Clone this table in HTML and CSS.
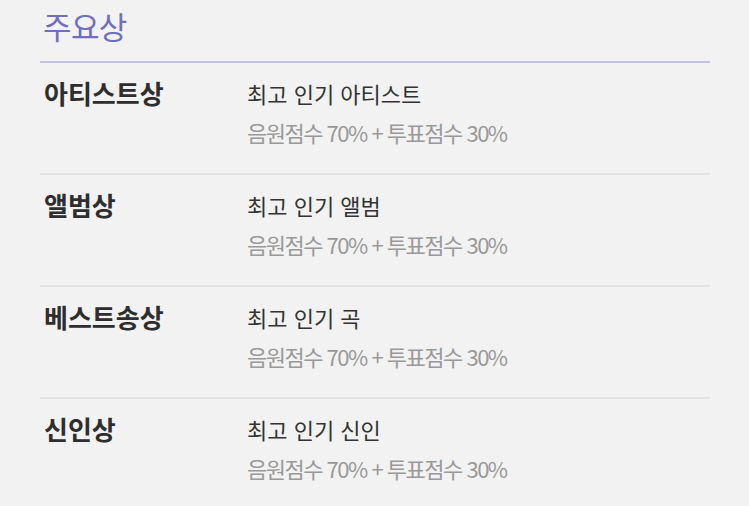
FILE: index.html
```html
<!DOCTYPE html>
<html lang="ko">
<head>
<meta charset="utf-8">
<link rel="stylesheet" href="styles.css">
</head>
<body>
<section class="awards">
  <h2 class="title">주요상</h2>
  <div class="row">
    <div class="name">아티스트상</div>
    <div class="info">
      <div class="desc">최고 인기 아티스트</div>
      <div class="score">음원점수 70% + 투표점수 30%</div>
    </div>
  </div>
  <div class="row">
    <div class="name">앨범상</div>
    <div class="info">
      <div class="desc">최고 인기 앨범</div>
      <div class="score">음원점수 70% + 투표점수 30%</div>
    </div>
  </div>
  <div class="row">
    <div class="name">베스트송상</div>
    <div class="info">
      <div class="desc">최고 인기 곡</div>
      <div class="score">음원점수 70% + 투표점수 30%</div>
    </div>
  </div>
  <div class="row last">
    <div class="name">신인상</div>
    <div class="info">
      <div class="desc">최고 인기 신인</div>
      <div class="score">음원점수 70% + 투표점수 30%</div>
    </div>
  </div>
</section>
</body>
</html>
```
FILE: styles.css
```css
html, body {
  margin: 0;
  padding: 0;
  background: #f2f2f2;
}
body {
  font-family: "Noto Sans CJK KR", "Noto Sans", sans-serif;
}
.awards {
  width: 670px;
  margin-left: 40px;
}
.title {
  margin: 0;
  height: 63px;
  box-sizing: border-box;
  padding: 4px 0 0 3px;
  font-size: 31px;
  line-height: 44px;
  font-weight: 400;
  color: #6f6fbd;
  border-bottom: 2px solid #c4c4e2;
  letter-spacing: -0.6px;
}
.row {
  display: grid;
  grid-template-columns: 207px 1fr;
  height: 112px;
  box-sizing: border-box;
  border-bottom: 2px solid #e4e4e4;
  padding-top: 13px;
}
.row.last {
  border-bottom: none;
}
.name {
  padding-left: 4px;
  font-size: 26px;
  line-height: 34px;
  font-weight: 700;
  color: #2e2e2e;
  letter-spacing: 0;
}
.desc {
  font-size: 22px;
  line-height: 34px;
  color: #333;
  letter-spacing: 0;
}
.score {
  margin-top: 6px;
  font-size: 22px;
  line-height: 32px;
  color: #999;
  letter-spacing: -1.5px;
}
```
